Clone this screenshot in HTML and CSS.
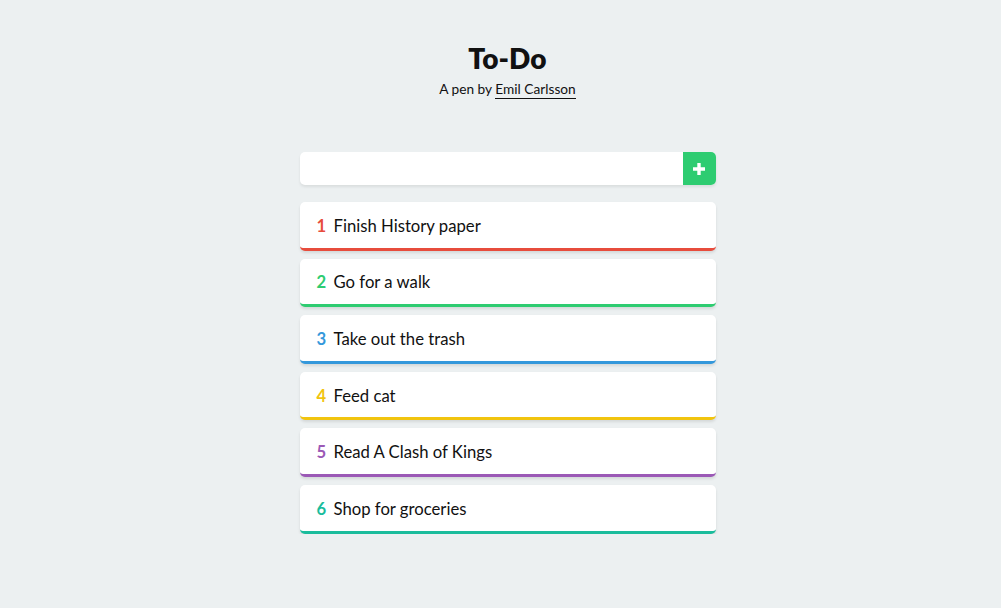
FILE: index.html
```html
<!DOCTYPE html>
<html>
<head>
<meta charset="utf-8">
<link rel="stylesheet" href="styles.css">
</head>
<body>
<header class="head">
  <h1 class="title">To-Do</h1>
  <p class="sub">A pen by <a class="author" href="#">Emil Carlsson</a></p>
</header>
<main class="app">
  <form class="add">
    <input class="field" type="text">
    <button class="btn" type="button" aria-label="Add">
      <svg width="12" height="12" viewBox="0 0 12 12"><path d="M4.3 0h3.4v4.3H12v3.4H7.7V12H4.3V7.7H0V4.3h4.3z" fill="#fff"/></svg>
    </button>
  </form>
  <ul class="list">
    <li class="item c1"><span class="num">1</span>Finish History paper</li>
    <li class="item c2"><span class="num">2</span>Go for a walk</li>
    <li class="item c3"><span class="num">3</span>Take out the trash</li>
    <li class="item c4"><span class="num">4</span>Feed cat</li>
    <li class="item c5"><span class="num">5</span>Read A Clash of Kings</li>
    <li class="item c6"><span class="num">6</span>Shop for groceries</li>
  </ul>
</main>
</body>
</html>
```
FILE: styles.css
```css
html, body { margin: 0; padding: 0; }
body {
  background: #ecf0f1;
  font-family: "Lato", "Liberation Sans", sans-serif;
  color: #111;
  padding-left: 14px;
}
.head { text-align: center; padding-top: 41px; }
.title {
  margin: 0;
  font-size: 28px;
  font-weight: 800;
  line-height: 34px;
  letter-spacing: 0.1px;
}
.sub {
  margin: 6px 0 0;
  font-size: 13.7px;
  line-height: 16px;
}
.author {
  color: #111;
  text-decoration: none;
  border-bottom: 1px solid #111;
  padding-bottom: 1px;
}
.app { width: 416px; margin: 55px auto 0; }
.add {
  display: flex;
  height: 33px;
  border-radius: 5px;
  background: #fff;
  box-shadow: 0 2px 3px rgba(0,0,0,0.08);
  overflow: hidden;
}
.field { flex: 1; border: 0; outline: 0; background: transparent; padding: 0 12px; font: inherit; }
.btn {
  width: 33px;
  border: 0;
  background: #2ecc71;
  display: flex;
  align-items: center;
  justify-content: center;
  padding: 0;
}
.list { list-style: none; margin: 17px 0 0; padding: 0; display: flex; flex-direction: column; gap: 8px; }
.item {
  height: 43.6px;
  padding-top: 2px;
  background: #fff;
  border-radius: 5px;
  border-bottom: 3px solid;
  box-shadow: 0 2px 3px rgba(0,0,0,0.1);
  display: flex;
  align-items: center;
  padding-left: 17px;
  font-size: 16.7px;
  color: #111;
}
.num { font-weight: 700; width: 17px; }
.c1 { border-color: #e74c3c; } .c1 .num { color: #e74c3c; }
.c2 { border-color: #2ecc71; } .c2 .num { color: #2ecc71; }
.c3 { border-color: #3498db; } .c3 .num { color: #3498db; }
.c4 { border-color: #f1c40f; } .c4 .num { color: #f1c40f; }
.c5 { border-color: #9b59b6; } .c5 .num { color: #9b59b6; }
.c6 { border-color: #1abc9c; } .c6 .num { color: #1abc9c; }
```
